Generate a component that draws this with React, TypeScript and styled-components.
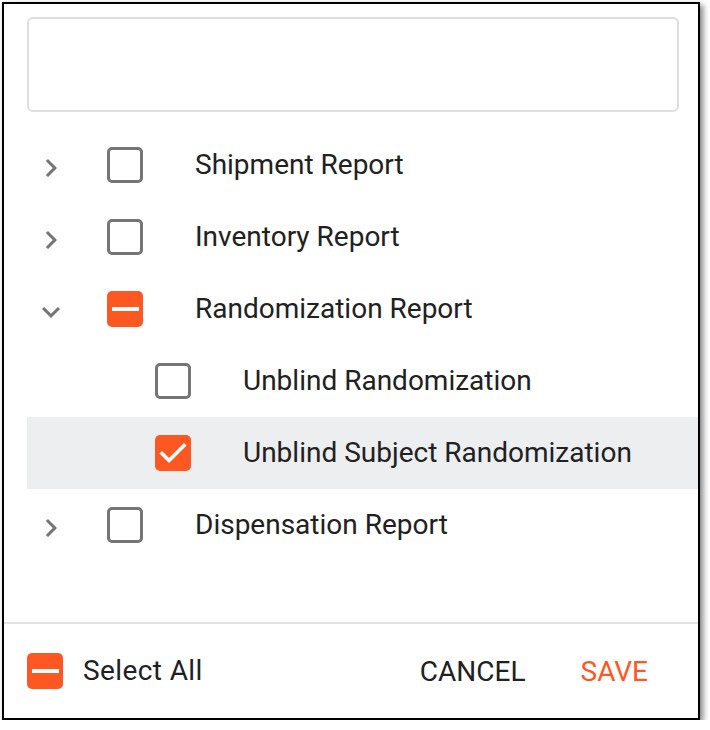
import React from "react";
import styled, { createGlobalStyle } from "styled-components";

const GlobalStyle = createGlobalStyle`
  html, body { margin: 0; padding: 0; background: #ffffff; }
  body { font-family: Roboto, "Liberation Sans", Arial, sans-serif; color: #212121; }
  * { box-sizing: border-box; }
`;

const ORANGE = "#ff5722";
const GRAY = "#757575";

const Frame = styled.div`
  margin: 2px 0 0 2px;
  width: 698px;
  height: 718px;
  border: 2px solid #000;
  background: #fff;
  box-shadow: 3px 3px 6px rgba(0, 0, 0, 0.5);
  display: flex;
  flex-direction: column;
`;

const Body = styled.div`
  flex: 1;
  padding: 13px 0 0 23px;
  display: flex;
  flex-direction: column;
`;

const SearchBox = styled.div`
  width: 652px;
  height: 95px;
  border: 2px solid #dedede;
  border-radius: 6px;
`;

const Tree = styled.div`
  margin-top: 17px;
  display: flex;
  flex-direction: column;
`;

const Row = styled.div<{ $active?: boolean }>`
  height: 72px;
  display: flex;
  align-items: center;
  background: ${(p) => (p.$active ? "#edeef0" : "transparent")};
`;

const ChevronCell = styled.div`
  width: 48px;
  height: 36px;
  margin-top: 6px;
  margin-right: 32px;
  display: flex;
  align-items: center;
  justify-content: center;
  flex: none;
`;

const Indent = styled.span<{ $depth: number }>`
  flex: none;
  width: ${(p) => p.$depth * 48}px;
`;

const Label = styled.span<{ $gap: number; $spacing?: number }>`
  font-size: 28px;
  line-height: 36px;
  margin-left: ${(p) => p.$gap}px;
  letter-spacing: ${(p) => p.$spacing ?? 0}px;
  color: #212121;
  white-space: nowrap;
`;

const Box = styled.span<{ $filled: boolean }>`
  flex: none;
  width: 36px;
  height: 36px;
  border-radius: 5px;
  background: ${(p) => (p.$filled ? ORANGE : "transparent")};
  border: ${(p) => (p.$filled ? "none" : `3.5px solid ${GRAY}`)};
  display: flex;
  align-items: center;
  justify-content: center;
`;

const Dash = styled.span`
  width: 27px;
  height: 4px;
  background: #fff;
`;

const Divider = styled.div`
  height: 2px;
  background: #e3e3e3;
`;

const Footer = styled.div`
  height: 94px;
  display: flex;
  align-items: center;
  padding: 0 38px 0 23px;
`;

const SelectAll = styled.div`
  display: flex;
  align-items: center;
  flex: 1;
`;

const TextButton = styled.button<{ $primary?: boolean }>`
  border: none;
  background: transparent;
  font-family: Roboto, "Liberation Sans", Arial, sans-serif;
  font-size: 28px;
  font-weight: 400;
  padding: 0 12px;
  margin-left: ${(p) => (p.$primary ? 31 : 0)}px;
  color: ${(p) => (p.$primary ? ORANGE : "#212121")};
  cursor: pointer;
`;

type State = "off" | "on" | "mixed";

function Checkbox({ state }: { state: State }) {
  return (
    <Box $filled={state !== "off"}>
      {state === "mixed" && <Dash />}
      {state === "on" && (
        <svg width="36" height="36" viewBox="0 0 36 36">
          <polyline
            points="7,18.5 14,25.5 29,10.5"
            fill="none"
            stroke="#fff"
            strokeWidth="3.6"
            strokeLinecap="square"
          />
        </svg>
      )}
    </Box>
  );
}

function Chevron({ open }: { open: boolean }) {
  return (
    <svg width="36" height="36" viewBox="0 0 24 24" fill={GRAY}>
      {open ? (
        <path d="M16.59 8.59L12 13.17 7.41 8.59 6 10l6 6 6-6z" />
      ) : (
        <path d="M10 6L8.59 7.41 13.17 12l-4.58 4.59L10 18l6-6z" />
      )}
    </svg>
  );
}

type Item = { label: string; depth: number; state: State; chevron?: "open" | "closed"; active?: boolean };

const items: Item[] = [
  { label: "Shipment Report", depth: 0, state: "off", chevron: "closed" },
  { label: "Inventory Report", depth: 0, state: "off", chevron: "closed" },
  { label: "Randomization Report", depth: 0, state: "mixed", chevron: "open" },
  { label: "Unblind Randomization", depth: 1, state: "off" },
  { label: "Unblind Subject Randomization", depth: 1, state: "on", active: true },
  { label: "Dispensation Report", depth: 0, state: "off", chevron: "closed" },
];

export default function App() {
  return (
    <>
      <GlobalStyle />
      <Frame>
        <Body>
          <SearchBox />
          <Tree>
            {items.map((it) => (
              <Row key={it.label} $active={it.active}>
                <ChevronCell>{it.chevron && <Chevron open={it.chevron === "open"} />}</ChevronCell>
                <Indent $depth={it.depth} />
                <Checkbox state={it.state} />
                <Label $gap={52}>{it.label}</Label>
              </Row>
            ))}
          </Tree>
        </Body>
        <Divider />
        <Footer>
          <SelectAll>
            <Checkbox state="mixed" />
            <Label $gap={20} $spacing={0.4}>Select All</Label>
          </SelectAll>
          <TextButton>CANCEL</TextButton>
          <TextButton $primary>SAVE</TextButton>
        </Footer>
      </Frame>
    </>
  );
}
